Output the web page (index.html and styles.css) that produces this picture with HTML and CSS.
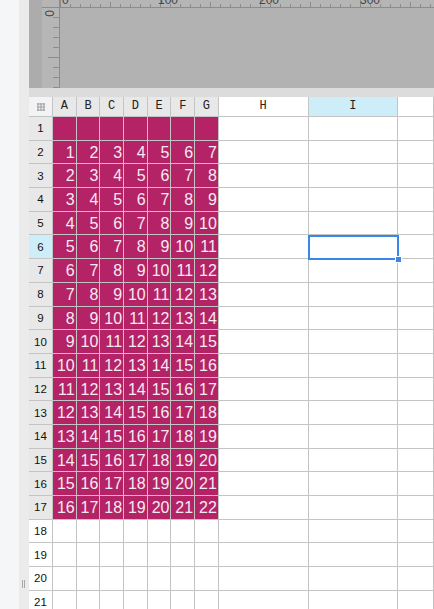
FILE: index.html
```html
<!DOCTYPE html>
<html lang="en">

<head>
    <meta charset="UTF-8">
    <title>Sheet</title>
    <link rel="stylesheet" href="styles.css">
</head>

<body>

    <div class="app">
        <div class="side"></div>
        <div class="strip"><span class="grip"></span></div>

        <div class="main">
            <div class="canvas">
                <svg class="rulers" width="405" height="88" viewBox="0 0 405 88">
                    <rect x="0" y="0" width="405" height="88" fill="#b2b2b2" />
                    <rect x="0" y="0" width="13" height="88" fill="#acacac" />
                    <rect x="13" y="0" width="17" height="88" fill="#b6b6b6" />
                    <rect x="13" y="0" width="392" height="7" fill="#b5b5b5" />
                    <g id="hticks" stroke="#8c8c8c" stroke-width="1"></g>
                    <g id="vticks" stroke="#8c8c8c" stroke-width="1"></g>
                    <line x1="13" y1="7.5" x2="405" y2="7.5" stroke="#8c8c8c" />
                    <line x1="30.5" y1="0" x2="30.5" y2="88" stroke="#8c8c8c" />
                    <g class="ruler-text" fill="#444">
                        <text x="33" y="4">0</text>
                        <text x="129" y="4">100</text>
                        <text x="230" y="4">200</text>
                        <text x="331" y="4">300</text>
                        <text x="0" y="0" transform="translate(16 10) rotate(90)">0</text>
                    </g>
                </svg>
            </div>
            <div class="band"></div>

            <div class="sheet" id="sheet">
                <div class="select-box"><span class="handle"></span></div>
            </div>
        </div>
    </div>

    <script>
        // ruler ticks
        const ht = document.getElementById('hticks');
        for (let x = 31; x < 405; x += 10) {
            const n = (x - 31) / 10;
            const top = n % 10 === 0 ? 0 : (n % 5 === 0 ? 2 : 4);
            ht.innerHTML += `<line x1="${x + 0.5}" y1="${top}" x2="${x + 0.5}" y2="7" />`;
        }
        const vt = document.getElementById('vticks');
        for (let y = 17; y < 88; y += 10) {
            const n = (y - 7) / 10;
            const left = n % 5 === 0 ? 19 : 24;
            vt.innerHTML += `<line x1="${left}" y1="${y + 0.5}" x2="30" y2="${y + 0.5}" />`;
        }

        // build the sheet
        const sheet = document.getElementById('sheet');
        const cols = ['A', 'B', 'C', 'D', 'E', 'F', 'G', 'H', 'I', ''];

        const corner = document.createElement('div');
        corner.className = 'cell corner';
        corner.innerHTML = '<span class="dots"></span>';
        sheet.appendChild(corner);

        cols.forEach((c, i) => {
            const h = document.createElement('div');
            h.className = 'cell col-head';
            if (i < 7) h.classList.add('hl');
            if (c === 'I') h.classList.add('active');
            h.textContent = c;
            sheet.appendChild(h);
        });

        for (let r = 1; r <= 21; r++) {
            const rh = document.createElement('div');
            rh.className = 'cell row-head';
            if (r <= 17) rh.classList.add('hl');
            if (r === 6) rh.classList.add('active');
            rh.textContent = r;
            sheet.appendChild(rh);

            for (let c = 0; c < cols.length; c++) {
                const cell = document.createElement('div');
                cell.className = 'cell';
                if (r <= 17 && c < 7) {
                    cell.classList.add('fill');
                    if (r > 1) cell.textContent = r - 1 + c;
                }
                sheet.appendChild(cell);
            }
        }
    </script>

</body>

</html>
```

FILE: styles.css
```css
body {
    margin: 0;
    padding: 0;
    background: #fff;
    overflow: hidden;
}

.app {
    display: flex;
    width: 434px;
    height: 609px;
    overflow: hidden;
}

.side {
    width: 19px;
    flex-shrink: 0;
    background: #f5f6f8;
}

.strip {
    width: 10px;
    flex-shrink: 0;
    background: #ebebeb;
    position: relative;
}

.grip {
    position: absolute;
    left: 3px;
    top: 580px;
    width: 1px;
    height: 8px;
    border-left: 1px solid #a8a8a8;
    border-right: 1px solid #a8a8a8;
}

.main {
    flex: 1;
    display: flex;
    flex-direction: column;
    min-width: 0;
}

.canvas {
    height: 88px;
    flex-shrink: 0;
    overflow: hidden;
}

.rulers {
    display: block;
}

.ruler-text {
    font-family: "Liberation Sans", Arial, sans-serif;
    font-size: 12px;
}

.band {
    height: 9px;
    flex-shrink: 0;
    background: #dcdcdc;
}

.sheet {
    position: relative;
    flex-shrink: 0;
    display: grid;
    grid-template-columns: 24px repeat(7, 23.7px) 89.7px 89.7px 1fr;
    grid-template-rows: 20px repeat(21, 23.7px);
}

.cell {
    box-sizing: border-box;
    border-right: 1px solid #c4c4c4;
    border-bottom: 1px solid #c4c4c4;
    background: #fff;
    overflow: hidden;
}

.corner {
    background: #f3f3f5;
    display: flex;
    align-items: center;
    justify-content: center;
}

.dots {
    width: 8px;
    height: 8px;
    background-image: radial-gradient(#9a9a9a 1px, transparent 1.2px);
    background-size: 3px 3px;
    background-position: -0.5px -0.5px;
}

.col-head {
    font-family: "Liberation Mono", "Courier New", monospace;
    font-size: 12px;
    color: #222;
    text-align: center;
    line-height: 19px;
}

.row-head {
    font-family: "Liberation Sans", Arial, sans-serif;
    font-size: 11.5px;
    color: #111;
    display: flex;
    align-items: center;
    justify-content: center;
}

.hl {
    background: #e8e8e8;
}

.active {
    background: #cdeef9;
}

.fill {
    background: #b32366;
    color: #f6eaf1;
    font-family: "Liberation Sans", Arial, sans-serif;
    font-size: 16px;
    text-align: right;
    padding-right: 1px;
    line-height: 23px;
}

.select-box {
    position: absolute;
    left: 279px;
    top: 138px;
    width: 91px;
    height: 25px;
    box-sizing: border-box;
    border: 2px solid #3a87ea;
    pointer-events: none;
}

.handle {
    position: absolute;
    right: -5px;
    bottom: -5px;
    width: 5px;
    height: 5px;
    background: #3a87ea;
    border: 1px solid #fff;
}
```
